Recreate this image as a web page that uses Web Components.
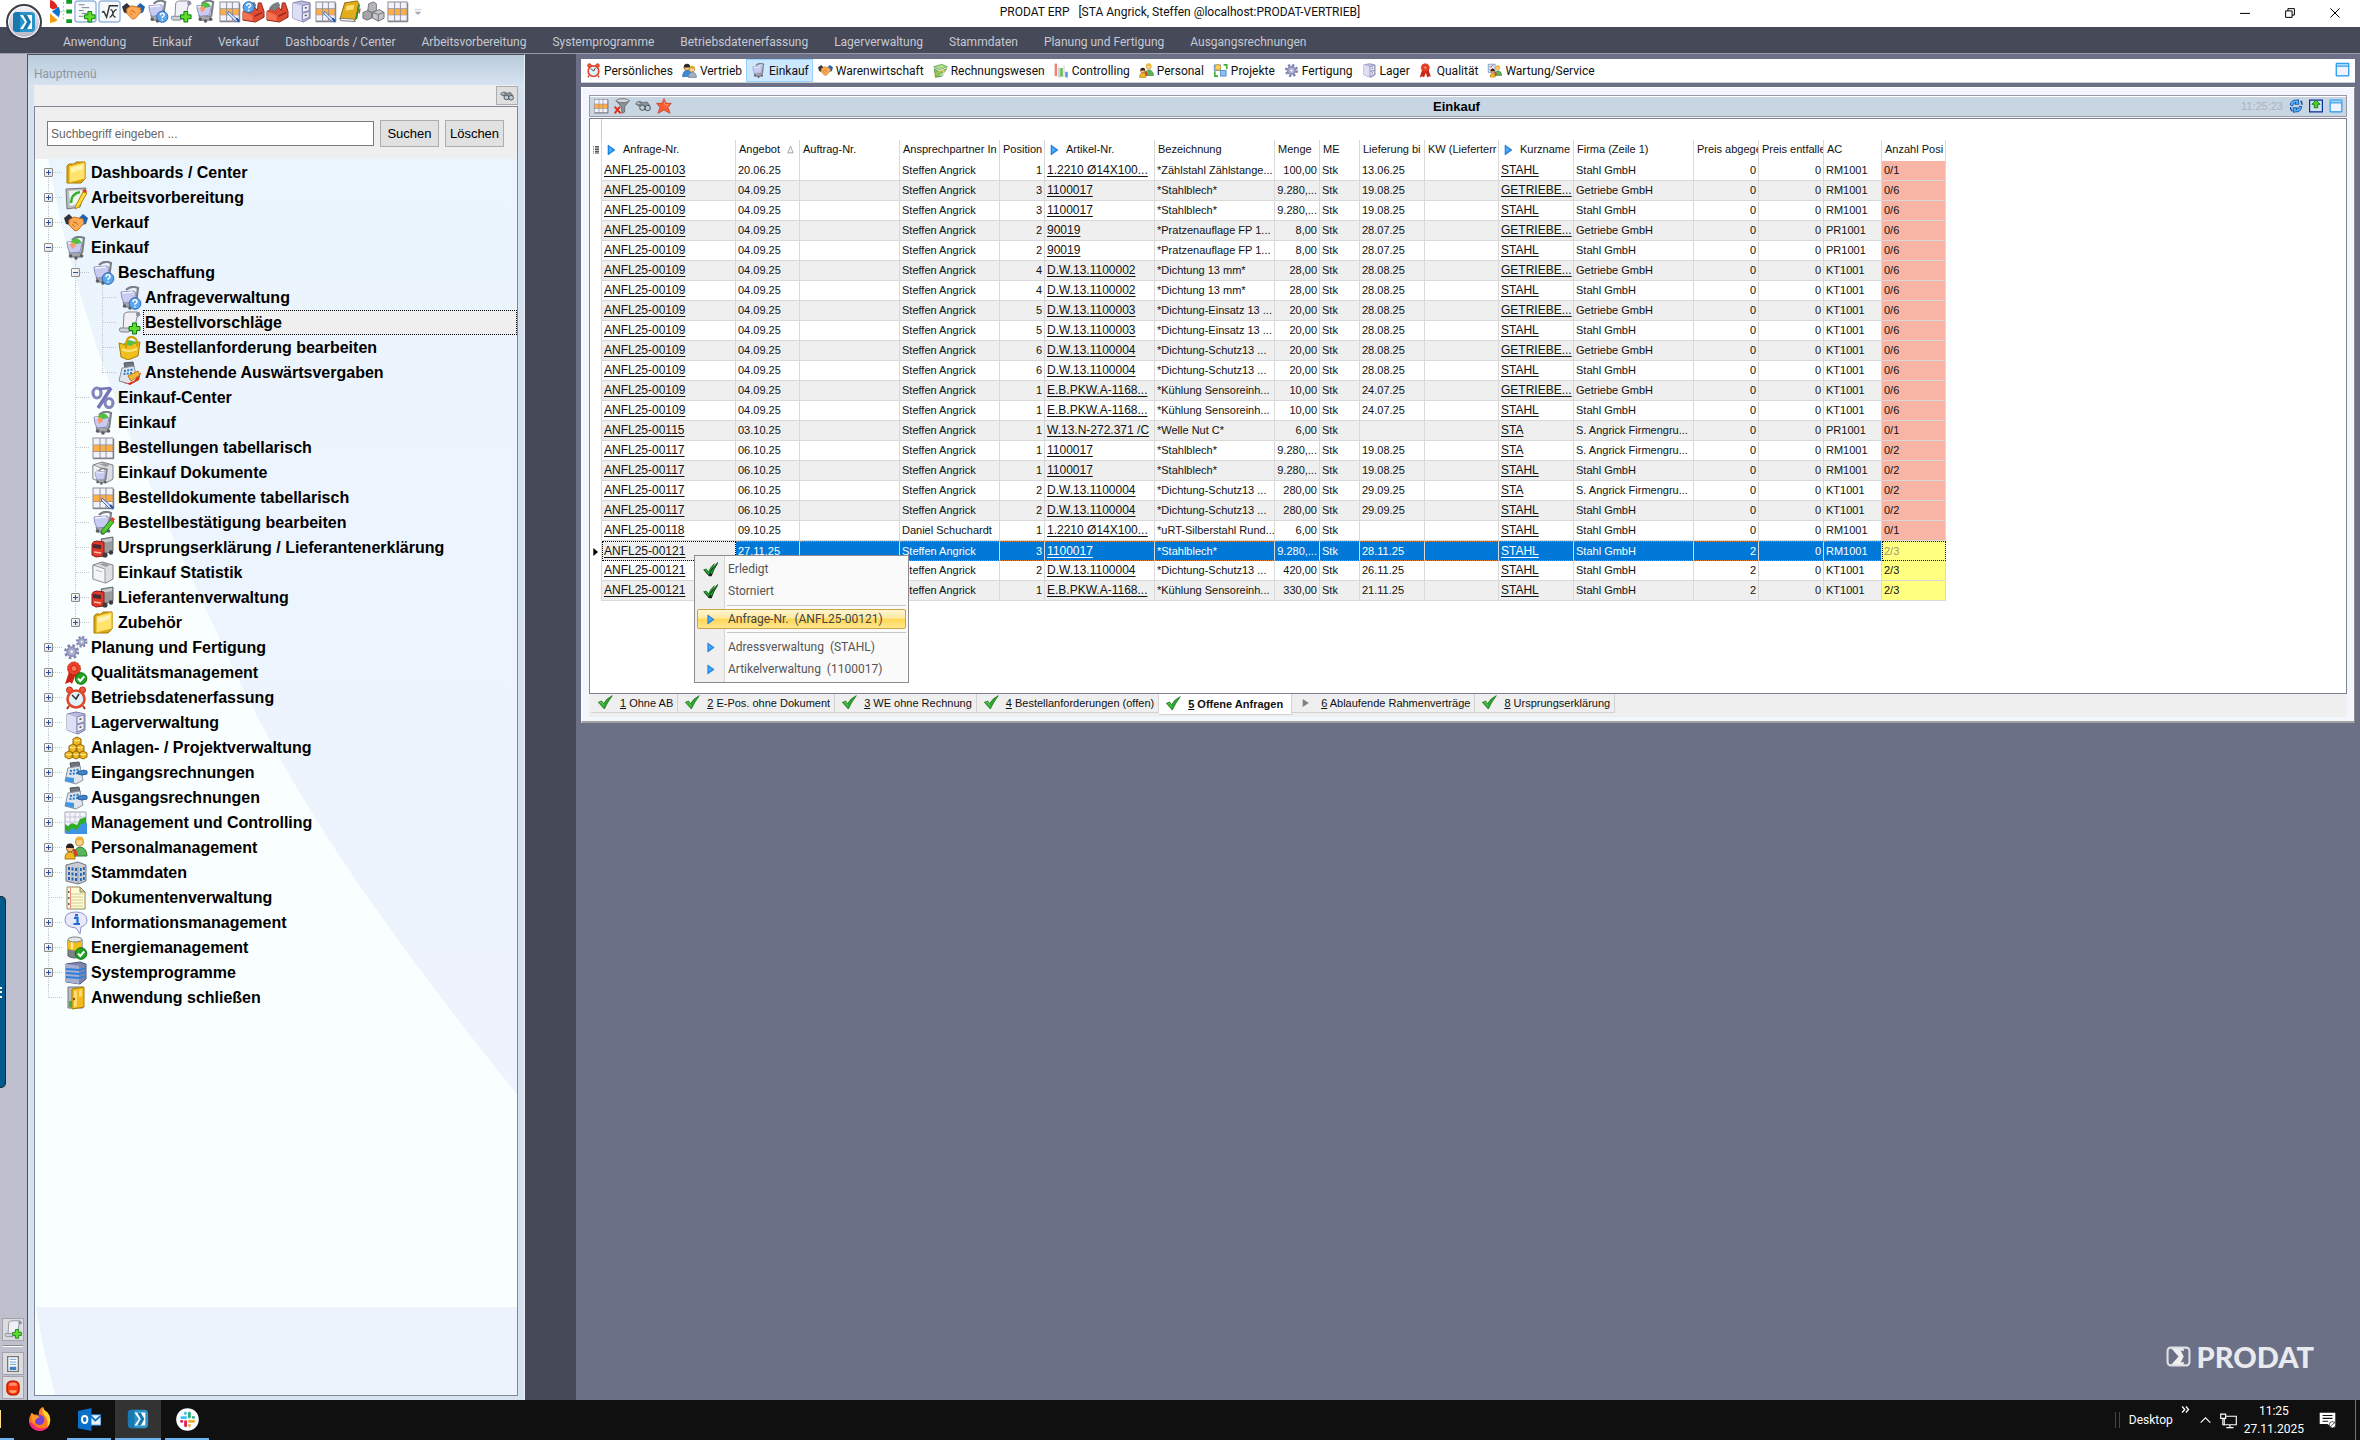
<!DOCTYPE html>
<html lang="de">
<head>
<meta charset="utf-8">
<title>PRODAT ERP</title>
<style>
html,body{margin:0;height:100%}
body{font-family:Roboto,"Open Sans",sans-serif;font-size:12px;overflow:hidden;
  --slate:#464957;--desk:#6b7086;--ui:Roboto,"Open Sans",sans-serif;--grid:"Liberation Sans",Arial,sans-serif}
erp-app{height:100vh}
</style>
</head>
<body>
<erp-app></erp-app>
<script>
/* ---------- icon parts, all on a 24x24 canvas ---------- */
const P={};
P.plus='<path d="M14.5 12h4v3.500h3.500v4h-3.500v3.500h-4v-3.500h-3.500v-4h3.500z" fill="#5fdc2c" stroke="#0c7a10"/>';
P.q='<circle cx="17" cy="17.500" r="5.800" fill="#5aa7ee" stroke="#2a66b4"/><path d="M15 16q0-2.200 2-2.200t2 1.900q0 1-2 2.200v.800M17 20.200v1.200" fill="none" stroke="#fff" stroke-width="1.500"/>';
P.ok='<circle cx="17" cy="17.500" r="5.800" fill="#22a322" stroke="#0d6e14"/><path d="M14 17.500l2.300 2.500 4-4.600" fill="none" stroke="#fff" stroke-width="2"/>';
P.cartBase='<path d="M8 4q4-4 9-3l3 1-2 15" fill="none" stroke="#7d8086" stroke-width="2.200"/><path d="M5 16l13 1-2 4H7z" fill="#a5a7ab" stroke="#6d6f74"/><circle cx="6.500" cy="20" r="1.800" fill="#5c5e63"/><circle cx="12" cy="22" r="1.800" fill="#5c5e63"/><circle cx="17.500" cy="20" r="1.800" fill="#5c5e63"/>';
P.basket='<path d="M3 6l13-1 2 2-2 9-10 1q-3-5-3-11z" fill="#c9cbf0" stroke="#8d90bd"/><path d="M4 7l11-1" stroke="#f2f2ff" stroke-width="1.500"/>';
P.load='<path d="M7 5l5-3 4 2 1 3-9 2z" fill="#4fc13a"/><path d="M6 8l4-2 2 4-4 3z" fill="#ff9a6a"/>';
P.gridBase='<path d="M1.500 1.500h21v21h-21z" fill="#8f9099"/><path d="M2.500 2.500h6v6h-6zM9.500 2.500h5v6h-5zM15.500 2.500H21.500v6h-6zM2.500 16h6v5.500h-6zM9.500 16h5v5.500h-5zM15.500 16H21.500v5.500h-6z" fill="#f1f2fb"/><path d="M2.500 9.300h6v6h-6zM9.500 9.300h5v6h-5zM15.500 9.300H21.500v6h-6z" fill="#ffad45"/><path d="M2 22.700h20.700V3" fill="none" stroke="#6f7078"/>';
P.tool='<path d="M11 12l9 8 2 3-4-1-8-8z" fill="#dfe6f7" stroke="#4e6ca8"/><path d="M19 19l3 3" stroke="#1d4fa3" stroke-width="2"/>';
P.factory='<path d="M1 21V12l5-3 3 3 4-5 3 4 1-8h3l3 9v6l-9 5z" fill="#dd4b32" stroke="#92261a"/><path d="M1 12l10 4v6L1 20z" fill="#f4714f"/><path d="M3 9q3-6 10-7l2 4-6 5z" fill="#7b7e84"/><path d="M13 17l8-4" stroke="#92261a" stroke-width="1.500"/>';
P.folder='<path d="M3 5l2-2 5 0 2-2 9 0v17l-4 4H3z" fill="#e0a80d" stroke="#a67a06"/><path d="M5 5l16-4v17L5 22z" fill="#ffe36b" stroke="#d9a514"/><path d="M7 7l12-3v4L7 12z" fill="#fff3b4"/>';
P.register='<path d="M6 2l9-1 1 5-9 1z" fill="#6d757e" stroke="#555"/><path d="M4 7l12-2 3 14-7 4-11-3z" fill="#dfe5ea" stroke="#8b939b"/><path d="M6 10l9-1.500M5.500 13l9-1" stroke="#2879c9" stroke-width="2" stroke-dasharray="2 1.300"/>';
P.truck='<path d="M10 3l12-2v14l-9 3z" fill="#9a9ca0" stroke="#6a6c70"/><path d="M11 4l10-2v3l-10 2z" fill="#c9cbce"/><path d="M1 8q1-3 5-3l7 1v14l-8 1-4-2z" fill="#e0392a" stroke="#8d1c14"/><path d="M2 8l8 1v4l-8-1z" fill="#432c33"/><path d="M3 16l7 1" stroke="#ffc1a8" stroke-width="1.500"/><circle cx="14" cy="19" r="2.600" fill="#3c3c40"/><circle cx="20" cy="16.500" r="2.200" fill="#3c3c40"/>';
P.printer='<path d="M2 4l9-3 11 3v14l-7 4-13-4z" fill="#dcdee2" stroke="#7f8287"/><path d="M2 4l12 4v14L2 18z" fill="#f4f5f6" stroke="#9a9da1"/><path d="M8 3l6-1 5 2-4 2z" fill="#9b9fa5"/><path d="M5 9l6 2" stroke="#b7babf"/>';
P.gear='<circle cx="12" cy="12" r="8.500" fill="none" stroke="#7f83ad" stroke-width="4" stroke-dasharray="3.600 3.070"/><circle cx="12" cy="12" r="6" fill="#b9bcdf" stroke="#8f93bb" stroke-width="3"/><circle cx="12" cy="12" r="2.500" fill="#fff" stroke="#8488b0"/>';
P.medal='<path d="M5 11L1 23l5-2 2 2 3-8 2 8 3-2 3 1-4-12z" fill="#c92516"/><circle cx="10" cy="7.500" r="6.500" fill="#ee4027" stroke="#b01c10" stroke-dasharray="2 1"/><circle cx="10" cy="7.500" r="3" fill="#ff7a5c" stroke="#c12815"/>';
P.clock='<circle cx="5.500" cy="4" r="3" fill="#f0573b" stroke="#b62b17"/><circle cx="18.500" cy="4" r="3" fill="#f0573b" stroke="#b62b17"/><path d="M5 20l-2 3M19 20l2 3" stroke="#b62b17" stroke-width="2"/><circle cx="12" cy="13" r="8.500" fill="#dff3fb" stroke="#e2452a" stroke-width="2.600"/><path d="M8 9l4 4 3-5" fill="none" stroke="#333" stroke-width="1.500"/>';
P.cabinet='<path d="M3 3l9-2 9 2v16l-7 4-11-4z" fill="#b9badd" stroke="#7d7fab"/><path d="M3 3l9 3v16l-9-3z" fill="#dedff5"/><path d="M13 6l7-2v7l-7 2zM13 14l7-2v6l-7 3z" fill="#eeeefa" stroke="#8385ad"/><path d="M15.500 8.500l2-.700M15.500 16.500l2-.900" stroke="#555" stroke-width="1.500"/>';
P.person='<circle cx="15.500" cy="6" r="4" fill="#fbd08a" stroke="#c98a24"/><path d="M11 5.500q0-5 4.500-5t4.500 5q-4-3-9 0z" fill="#e9b532"/><path d="M10 20q0-8 6-9 7 1 7 9z" fill="#58b55a" stroke="#2e7e35"/><path d="M8 13h4l2 6-3 2z" fill="#d9402c"/><circle cx="6" cy="12.500" r="3.500" fill="#f3bf7a" stroke="#8d5a22"/><path d="M2 12q0-4.500 4-4.500t4 4.500z" fill="#28221e"/><path d="M1 23q0-7 5-7t5 7z" fill="#f1b724" stroke="#a87607"/>';
P.win='<rect x="2" y="2" width="20" height="20" rx="1" fill="#f1f2ff" stroke="#1f97ee" stroke-width="2"/><path d="M2 6.500h20" stroke="#1f97ee" stroke-width="2"/><path d="M3 4h18" stroke="#9fdcff" stroke-width="2"/>';
P.hand='<path d="M0 7l5-4 4 4-3 7-4-1z" fill="#2f343d"/><path d="M24 7l-5-4-4 4 3 7 4-1z" fill="#1e62b8"/><path d="M5 9l5-3 9 2 1 4-6 7-3 1-6-6z" fill="#fbaa55" stroke="#cf6f1c"/><path d="M9 11l4 1M11 16l-3-3M14 14l-3-3" stroke="#cf6f1c"/>';
P.scroll='<path d="M6 3q2-2 4-2h9q3 0 3 3l-3 2-3 14H5z" fill="#f0f0f6" stroke="#85878f"/><path d="M19 1q3 0 3 3l-3 2q-2-3 0-5z" fill="#8a8da6"/><path d="M2 17h9q2 2 0 4H3q-3-1-1-4z" fill="#cfd0dd" stroke="#85878f"/>';
P.binoc='<path d="M1 9l6-4 5 2 6-1 4 5-2 6-5 1-4-5-5-1z" fill="#8f949a" stroke="#4d5156"/><ellipse cx="5" cy="8" rx="3.500" ry="2.500" fill="#b5babf" stroke="#5d6166"/><circle cx="11" cy="14.500" r="4" fill="#b8cdd6" stroke="#4d5156" stroke-width="1.500"/><circle cx="19" cy="15" r="4" fill="#b8cdd6" stroke="#4d5156" stroke-width="1.500"/>';
P.tri='<path d="M6 2l14 10L6 22z" fill="#1f8ff0" stroke="#0d5fb8"/><path d="M8 6v11l7-5z" fill="#4fadff"/>';
P.sheet='<rect x="1" y="1" width="22" height="22" rx="3" fill="#f7fafd" stroke="#98b7de" stroke-width="1.500"/>';
P.logo='<rect x="1" y="2" width="22" height="20" rx="4" fill="#2a94c9"/><path d="M1 6q0-4 4-4h3v20H5q-4 0-4-4z" fill="#1879b0"/>';
const pencil='<path d="M20 8l3 3-9 11-4 1 1-4z" fill="#54cd35" stroke="#23811a"/><path d="M19 9l2-3 3 2-2 3z" fill="#e2402a"/>';
const ICONS={
 pie:'<path d="M0 0q6 1 8 8L3 10 0 8z" fill="#e0231c"/><path d="M2 12l7-5q3 5 0 11z" fill="#1272d0"/><path d="M0 14l8 7q-4 3-8 3z" fill="#f39c12"/><path d="M17 0h6v4h-6zM17 10h6v4h-6zM17 20h6v4h-6z" fill="#0e9b26"/><path d="M11 12h5M14 2v20" stroke="#8bd194" stroke-width="1" stroke-dasharray="2 2"/>',
 docplus:P.sheet+'<path d="M5 5h6M8 8h8M5 11h5M8 14h6M5 17h5" stroke="#77808c"/>'+P.plus,
 sqrt:P.sheet+'<path d="M4 13l2-1 3 6 3-12h9" fill="none" stroke="#333" stroke-width="1.500"/><path d="M13 10q2 0 2.500 4t3 4M19.500 10q-2 0-4 4t-3.500 4" fill="none" stroke="#333" stroke-width="1.300"/>',
 hands:P.hand,cart:P.cartBase+P.basket+P.load,cartq:P.cartBase+P.basket+P.q,cartplain:P.cartBase+P.basket,
 cartpen:P.cartBase+P.basket+pencil,
 scroll:P.scroll+P.plus,grid:P.gridBase,gridpen:P.gridBase+P.tool,
 factory:P.factory,factoryq:P.factory+'<g transform="translate(-10 -10)">'+P.q+'</g>',
 cabinet:P.cabinet,
 book:'<path d="M7 3l13-2 2 3-4 17-16-1z" fill="#e2ad1a" stroke="#8e6606"/><path d="M2 19l14 1 2 2.500-15-1z" fill="#fff" stroke="#777"/><path d="M9 6l8-1-1 5-8 1z" fill="#ffdf70"/><path d="M22 5l-3 15" stroke="#2f8f3a" stroke-width="2"/><path d="M23 9l-1 5" stroke="#d9402c" stroke-width="1.500"/>',
 bricks:'<path d="M7 4l5-2 3 2v7l-5 2-4-2z" fill="#b3b5b8" stroke="#77797d"/><path d="M1 13l5-2 4 2v6l-5 2-4-2z" fill="#a4a6a9" stroke="#707276"/><path d="M11 13l7-3 5 3v6l-6 3-6-3z" fill="#c5c7ca" stroke="#707276"/><path d="M11 13l6 2 6-2M17 15v7" fill="none" stroke="#707276"/>',
 folder:P.folder,
 plan:'<path d="M2 3l20-1-6 19-13 2z" fill="#b9bdc1" stroke="#73777c"/><path d="M5 5l14-1-4 14-9 2z" fill="#eef6ee"/><path d="M7 17q0-9 9-11" fill="none" stroke="#36b136" stroke-width="2.500"/><path d="M19 6l4 1-8 14-4 2 1-4z" fill="#ffd83b" stroke="#b98b0a"/><path d="M18 5l2-2 3 2-1 2z" fill="#dd3a28"/>',
 bag:'<path d="M1 7l7 2 14-3-2 14-10 4-7-3z" fill="#f1bf1d" stroke="#a97f05"/><path d="M5 8l6-4 8 2-6 4z" fill="#57c145"/><path d="M8 12Q8 0 14 1t5 9" fill="none" stroke="#d39d07" stroke-width="2.200"/><path d="M4 13q5 4 15 0" fill="none" stroke="#ffe684" stroke-width="2"/>',
 registerred:P.register+'<path d="M3 20l5 3 8-3 7-9-2 8-9 5z" fill="#d9301d"/><path d="M10 15l10-5 2 4-9 6z" fill="#f5b83b" stroke="#b57c10"/>',
 register:P.register+'<path d="M2 16l8 1v5l-9-2z" fill="#3f97e6"/><path d="M14 10l4 0 1-1 4 1v3l-5 1-4-1z" fill="#3f86cf" stroke="#275b99"/>',
 percent:'<path d="M20 2L7 22" stroke="#7376b4" stroke-width="3.500"/><ellipse cx="6" cy="7" rx="4" ry="5" fill="none" stroke="#8386bd" stroke-width="3.200"/><ellipse cx="18" cy="17" rx="4" ry="4.500" fill="none" stroke="#8386bd" stroke-width="3.200"/><path d="M8 3l12-1" stroke="#7376b4" stroke-width="2.500"/>',
 printcart:P.printer+'<g transform="translate(2 7) scale(.7)">'+P.cartBase+P.basket+'</g>',
 printer:P.printer,truck:P.truck,
 gears:'<g transform="translate(-1 7) scale(.72)">'+P.gear+'</g><g transform="translate(11 -1) scale(.56)">'+P.gear+'</g>',
 gear:P.gear,medal:P.medal,medalok:P.medal+P.ok,clock:P.clock,
 gold:'<g fill="#f0b81e" stroke="#93690a"><path d="M9 3l4-2 4 2v5l-4 2-4-2z"/><path d="M5 10l4-2 4 2v5l-4 2-4-2zM12 10l4-2 4 2v5l-4 2-4-2z"/><path d="M1 17l4-2 4 2v4l-4 2-4-2zM8 17l4-2 4 2v4l-4 2-4-2zM15 17l4-2 4 2v4l-4 2-4-2z"/></g><path d="M10 4l3 1 3-1M6 11l3 1 3-1M13 11l3 1 3-1M2 18l3 1 3-1M9 18l3 1 3-1M16 18l3 1 3-1" fill="none" stroke="#fff0a5"/>',
 area:'<path d="M1 1h21v21H1z" fill="#f4f5fb" stroke="#a5a7b8"/><path d="M6 1v20M11 1v20M16 1v20M1 6h21M1 11h21" stroke="#c5c7d6"/><path d="M1 22v-6l6 1 6-2 4-5 6 2v11H3z" fill="#3f93e4"/><path d="M1 13l3 2 4-3 5 2 3-6 6-2v6l-5 1-4 6-5-2-4 4-3-3z" fill="#2fae25"/>',
 people:P.person,
 building:'<path d="M2 4l12-3 8 3v16l-8 3-12-3z" fill="#c9ccd4" stroke="#71757e"/><path d="M14 6v17" stroke="#8b8f99"/><g fill="#2463b5"><path d="M4 6h2v3H4zM7.500 6.500h2v3h-2zM11 7h2v3h-2zM4 11h2v3H4zM7.500 11.500h2v3h-2zM11 12h2v3h-2zM4 16h2v3H4zM7.500 16.500h2v3h-2zM11 17h2v3h-2zM16 7h1.800v3H16zM19 6h1.800v3H19zM16 12h1.800v3H16zM19 11h1.800v3H19zM16 17h1.800v3H16zM19 16h1.800v3H19z"/></g>',
 notes:'<path d="M3 1h13l5 5v17H3z" fill="#fffbd0" stroke="#8e8a62"/><path d="M16 1v5h5z" fill="#d8d28f" stroke="#8e8a62"/><path d="M7 8h12M7 11h12M7 14h12M7 17h12M7 20h12" stroke="#d2cc96"/><path d="M6.500 1v22" stroke="#e68a8a"/><path d="M4 6h1.500M4 12h1.500M4 18h1.500" stroke="#333" stroke-width="1.500"/>',
 info:'<path d="M12 1q10 0 11 8 0 5-6 7l-1 7-4-6Q1 16 1 9q0-8 11-8z" fill="#e7e8fb" stroke="#8f92c4"/><path d="M12.500 3v2.500" stroke="#1b6fd0" stroke-width="3"/><path d="M10 7h3.500v6M9.500 13h6.500" fill="none" stroke="#1b6fd0" stroke-width="2.200"/>',
 battery:'<path d="M4 4v16q6 4 14 0V4z" fill="#7d8188" stroke="#5a5d63"/><path d="M4 4v9q7 3 14 0V4z" fill="#f2bd17"/><path d="M8 5v8" stroke="#ffe79a" stroke-width="2.500"/><ellipse cx="11" cy="3.500" rx="7" ry="2.500" fill="#e4e6e8" stroke="#7d8085"/>'+P.ok,
 server:'<path d="M2 3l14-2 6 2v15l-6 5-14-2z" fill="#7f86ad" stroke="#4f5680"/><path d="M2 3l13 2v18L2 21z" fill="#a7aed0"/><path d="M2 8l13 1 7-2M2 12l13 1 7-2M2 16l13 1 7-2" fill="none" stroke="#2d7fdc" stroke-width="1.800"/>',
 door:'<path d="M4 1h15v21H4z" fill="#b9bcc0" stroke="#74777b"/><path d="M5 15h3v6H5z" fill="#49b13d"/><path d="M8 3l12-2v20L8 23z" fill="#f4ba1a" stroke="#a97c08"/><path d="M15 4l3-.500v7l-3 .500zM10 5l3-.500v16l-3 .500z" fill="#ffdd70"/><circle cx="10" cy="13" r="1.200" fill="#7c5600"/>',
 binoc:P.binoc,
 funnel:'<path d="M3 4q10-5 20 0l-7 9v8l-4 2-1-10z" fill="#8c9096" stroke="#55585d"/><ellipse cx="13" cy="4" rx="9.500" ry="2.800" fill="#d6d9dc" stroke="#55585d"/><path d="M1 13l9 10M9 13L1 23" stroke="#e0331c" stroke-width="3"/>',
 star:'<path d="M12 1l3 7 8 0-5 6 3 9-9-5-9 5 3-9-5-6 8 0z" fill="#ff5b33" stroke="#c32d10"/><path d="M12 5l1.500 5 5 0-3 3" fill="none" stroke="#ffb193"/>',
 refresh:'<path d="M2 10q2-9 11-8l3-1 1 8-7 0 2-3q-5 0-6 6zM22 13q-2 10-11 9l-3 1-1-8 7 0-2 3q5 0 6-6z" fill="#58b2fa" stroke="#0d50a5" stroke-width="1.500"/><path d="M20 3q3 4 2 7M3 14q-1 5 3 7" stroke="#0d50a5" stroke-width="2.500" fill="none"/>',
 exp:'<path d="M1 2h22v20H1z" fill="#cfe0ee" stroke="#062f95" stroke-width="2"/><path d="M12 2l7 7h-4v6H9V9H5z" fill="#49d326" stroke="#0a7a10" stroke-width="1.500"/>',
 win:P.win,
 check:'<path d="M2 11l5-2 3 4Q14 5 23 1q-7 9-12 20z" fill="#2ea82e" stroke="#126612"/><path d="M4 12l3-1 3 5" fill="none" stroke="#7be070"/>',
 dbl:'<path d="M1 14l4-1 4 4Q14 8 23 3q-7 9-10 20H9z" fill="#1d1f1d"/><path d="M1 13l4-1 3 5Q11 9 17 4q-5 8-8 17z" fill="#23b031" stroke="#0a5b12"/><path d="M10 15l2 1Q16 9 22 2q-6 10-9 18z" fill="#23c031" stroke="#0a5b12"/>',
 tri:P.tri,trigrey:'<path d="M7 6l9 6-9 6z" fill="#7d7f84"/>',
 users:'<circle cx="8" cy="7" r="5" fill="#f5c684" stroke="#7c5420"/><path d="M3 7q0-6 5-6t5 6z" fill="#2f2a28"/><path d="M1 22q0-10 8-10 6 0 6 9z" fill="#3f8bd8" stroke="#215698"/><circle cx="16" cy="10" r="4.500" fill="#fbd79d" stroke="#a07020"/><path d="M11.500 9q1-5 5-4.500t4 4.500z" fill="#dba62a"/><path d="M10 23q0-8 7-8 6 0 6 8z" fill="#9fb0c4" stroke="#5c6f86"/>',
 money:'<path d="M1 6l13-4 9 4-12 5z" fill="#a9dd8d" stroke="#4c8c34"/><path d="M2 9l9 5 11-5-8 12-10 2z" fill="#7fc460" stroke="#3d7f28"/><path d="M9 13q5-3 8 0t-6 7" stroke="#d8e6c9" stroke-width="2" fill="none"/><path d="M2 20q8-8 18-9" stroke="#efb733" stroke-width="1.500" fill="none"/>',
 bars:'<path d="M1 1h4v20H1z" fill="#ee8277"/><path d="M7 7h2v16H7z" fill="#b3b5ba"/><path d="M10 8h4v14h-4z" fill="#62b84c"/><path d="M15 4h2v18h-2z" fill="#d2d4d8"/><path d="M18 14h4v9h-4z" fill="#5a93dc"/>',
 project:'<path d="M2 3h10v9H2z" fill="#a7c7f0" stroke="#3b70b4"/><circle cx="8" cy="7" r="4.500" fill="#ffd05a" stroke="#c48a10"/><path d="M12 12h9v9h-9z" fill="#8bbef2" stroke="#2d68ae"/><path d="M3 13v8h5M17 3h5v7" fill="none" stroke="#3fae36" stroke-width="2.500"/>',
 service:'<path d="M2 2h11v13H2z" fill="#dfeaf9" stroke="#4579bb"/><path d="M4 5l2 2 4-4M4 10l2 2 4-4" stroke="#e04a34" stroke-width="1.500" fill="none"/><g transform="translate(4 3) scale(.85)">'+P.person+'</g>',
 list:'<path d="M4 1h16v22H4z" fill="#fff" stroke="#777" stroke-width="2"/><path d="M7 5h10M7 9h10M7 12.500h10" stroke="#6fa0cf" stroke-width="1.500"/><path d="M7 16h10v5H7z" fill="#3f82bf"/>',
 red:'<rect x="4" y="3" width="16" height="18" rx="6" fill="#ff3a10" stroke="#c21c00" stroke-width="2"/><path d="M7 6q5-3 10 0v3H7z" fill="#ff8f76"/><path d="M7 15h10q-1 4-5 4t-5-4z" fill="#ffa96b"/>',
 logo:P.logo+'<path d="M8 5h12v14H8l5-7z" fill="#fff"/><path d="M11 5h4l4 7-4 7h-4l4-7z" fill="#1879b0"/>',
 mark:'<rect x="1.500" y="3.500" width="21" height="17" rx="3" fill="none" stroke="#dedfe5" stroke-width="2"/><path d="M5 4h12v3l-3-1 3 6-3 6 3-1v3H5l7-8z" fill="#f0f0f2"/>',
 firefox:'<path d="M12 2q2-2 3-2 1 4 4 5 4 5 3 10-2 8-10 9-9-1-11-9 0-6 3-9l2 2q3-1 5 0-1-3 1-6z" fill="#ff7a1c"/><path d="M15 0q1 4 4 5 4 5 3 10 0 3-3 5 2-7-2-11-4-4-2-9z" fill="#ffd53a"/><path d="M1 14q1 9 10 10 7 0 10-5-8 5-14 0-3-3-6-5z" fill="#f0297a"/><circle cx="11.500" cy="13" r="5" fill="#7542d4"/><path d="M3 6l4 2 5 2-4 2q-2 3 0 5-4-2-4-6z" fill="#ff9a28"/>',
 outlook:'<path d="M13 7h11v11H13z" fill="#e9f2fa" stroke="#0f6fc4"/><path d="M13 8l5 5 6-5" fill="none" stroke="#0f6fc4" stroke-width="1.800"/><path d="M0 3l14-3v24L0 21z" fill="#0a6fc8"/><ellipse cx="7" cy="12" rx="2.800" ry="3.600" fill="none" stroke="#fff" stroke-width="2"/>',
 slack:'<circle cx="12" cy="12" r="11.800" fill="#fff"/><g stroke-width="3" stroke-linecap="round"><path d="M6 10h4M9.800 5.500v.300" stroke="#36c5f0"/><path d="M14 5.500v4M18 9.800h.300" stroke="#2eb67d"/><path d="M14 14h4.500M14 18.200v.300" stroke="#ecb22e"/><path d="M10 14.200v4.300M5.800 14h.300" stroke="#e01e5a"/></g>',
 net:'<path d="M6 6h17v12H6zM14 18v4M9 22h10" fill="none" stroke="#fff" stroke-width="1.600"/><path d="M1 3h7v6H1z" fill="#101010" stroke="#fff" stroke-width="1.600"/><path d="M4 9v9h3" fill="none" stroke="#fff" stroke-width="1.600"/>',
 note:'<path d="M1 1h22v16h-5v5l-6-5H1z" fill="#fff"/><path d="M5 5h14M5 9h14M5 13h8" stroke="#101010" stroke-width="1.500"/><circle cx="19" cy="18" r="4.500" fill="#fff" stroke="#101010"/><path d="M16 21l6-6" stroke="#101010"/>',
 chev:'<path d="M3 16l9-9 9 9" fill="none" stroke="#fff" stroke-width="2"/>',
 raquo:'<path d="M3 4l7 8-7 8M13 4l7 8-7 8" fill="none" stroke="#fff" stroke-width="3.500"/>',
 min:'<path d="M0 13h24" stroke="#000" stroke-width="2.400"/>',
 restore:'<path d="M1.500 7h15.500v15.500H1.500zM7 7V1.500h15.500v15.500h-5.500" fill="none" stroke="#000" stroke-width="2.400"/>',
 close:'<path d="M1 1l22 22M23 1L1 23" stroke="#000" stroke-width="2.400"/>',
 over:'<path d="M2 5h20M4 12h16l-8 8z" stroke="#aaaab8" stroke-width="2" fill="#aaaab8"/>',
 sort:'<path d="M12 3l7 18H5z" fill="none" stroke="#888" stroke-width="2"/>',
 rows:'<path d="M9 1h12M9 6h12M9 11h12M9 16h12M9 21h12M3 1h2M3 6h2M3 11h2M3 16h2M3 21h2" stroke="#111" stroke-width="2.500"/>',
 cur:'<path d="M4 0l14 12L4 24z" fill="#000"/>'
};
const base=(css,html)=>{const t=document.createElement('template');
  t.innerHTML=`<style>*{box-sizing:border-box}button{font:inherit;color:inherit;background:none;border:0;padding:0;margin:0}${css}</style>${html}`;return t;};
const def=(name,css,html,ready)=>customElements.define(name,class extends HTMLElement{
  connectedCallback(){ if(this.shadowRoot)return;
    const r=this.attachShadow({mode:'open'});
    r.append(base(css,typeof html==='function'?html(this):html).content.cloneNode(true)); if(ready)ready(this,r);}});
const ic=(n,s=16)=>`<erp-icon name="${n}" style="--s:${s}px"></erp-icon>`;

def('erp-icon',':host{display:inline-flex;flex:none;width:var(--s,24px);height:var(--s,24px)}svg{width:100%;height:100%;display:block}',
  e=>`<svg viewBox="0 0 24 24" aria-hidden="true">${ICONS[e.getAttribute('name')]||''}</svg>`);

/* ---------- title bar ---------- */
def('erp-titlebar',`:host{display:grid;grid-template-columns:minmax(0,1fr) auto minmax(0,1fr);align-items:start;height:27px;background:#fff;position:relative}
.quick{display:flex;align-items:center;padding-left:49px}.quick button{display:flex;width:24px;height:24px;justify-content:center}
.quick .more{margin-left:1px;width:16px;align-items:center}
h1{margin:0;font:12px/25px var(--ui);white-space:pre;color:#111}
.ctl{display:flex;justify-content:flex-end;align-items:center;height:25px;gap:35px;padding-right:20px}
.ctl button{display:flex}
.orb{position:absolute;z-index:3;left:6px;top:4px;width:36px;height:36px;border-radius:50%;border:2px solid #3d404b;background:linear-gradient(#f3f3f7,#b4b5c4);display:flex;align-items:center;justify-content:center;box-shadow:inset 0 0 0 1px #fff}`,
`<button class="orb" aria-label="Anwendungsmenü">${ic('logo',24)}</button>
<div class="quick">${'pie docplus sqrt hands cartq scroll cart gridpen factoryq factory cabinet gridpen book bricks grid'.split(' ').map(n=>`<button aria-label="${n}">${ic(n,23)}</button>`).join('')}<button class="more" aria-label="Mehr">${ic('over',8)}</button></div>
<h1>PRODAT ERP   [STA Angrick, Steffen @localhost:PRODAT-VERTRIEB]</h1>
<div class="ctl"><button aria-label="Minimieren">${ic('min',10)}</button><button aria-label="Wiederherstellen">${ic('restore',10)}</button><button aria-label="Schließen">${ic('close',10)}</button></div>`);

/* ---------- ribbon menu ---------- */
def('erp-menubar',`:host{display:block;background:var(--slate);border-bottom:1px solid #9b9ba8}
nav{display:flex;gap:26px;padding-left:63px;height:26px;align-items:center}
button{color:#c6c9d4;line-height:26px;padding-top:3px;white-space:nowrap}`,
`<nav>${['Anwendung','Einkauf','Verkauf','Dashboards / Center','Arbeitsvorbereitung','Systemprogramme','Betriebsdatenerfassung','Lagerverwaltung','Stammdaten','Planung und Fertigung','Ausgangsrechnungen'].map(t=>`<button>${t}</button>`).join('')}</nav>`);

/* ---------- left dock ---------- */
def('erp-dock',`:host{display:flex;flex-direction:column;justify-content:flex-end;gap:1px;width:27px;background:#bfbfce;padding:0 3px 1px 2px;position:relative}
button{display:flex;align-items:center;justify-content:center;height:23px;background:#dcdcdf;border:1px solid #a3a3ad}
hr{width:20px;height:2px;margin:3px 0 4px 1px;border:0;background:#fff;border-top:1px solid #888}
.fly{position:absolute;left:0;bottom:312px;width:6px;height:192px;background:#005b8c;border:1px solid #1b2430;border-left:0;border-radius:0 5px 5px 0;display:flex;align-items:center;color:#fff}
.fly i{width:2px;height:11px;border-block:2px solid #fff;background:linear-gradient(#fff,#fff) center/2px 2px no-repeat}`,
`<div class="fly"><i></i></div><button aria-label="Bestellvorschläge">${ic('scroll',19)}</button><hr><button aria-label="Liste">${ic('list',16)}</button><button aria-label="Beenden">${ic('red',18)}</button>`);

/* ---------- tree ---------- */
const TREE=[[0,'+','folder','Dashboards / Center'],[0,'+','plan','Arbeitsvorbereitung'],[0,'+','hands','Verkauf'],[0,'-','cart','Einkauf'],
[1,'-','cartq','Beschaffung'],[2,'','cartq','Anfrageverwaltung'],[2,'','scroll','Bestellvorschläge'],[2,'','bag','Bestellanforderung bearbeiten'],[2,'','registerred','Anstehende Auswärtsvergaben'],
[1,'','percent','Einkauf-Center'],[1,'','cart','Einkauf'],[1,'','grid','Bestellungen tabellarisch'],[1,'','printcart','Einkauf Dokumente'],[1,'','gridpen','Bestelldokumente tabellarisch'],[1,'','cartpen','Bestellbestätigung bearbeiten'],[1,'','truck','Ursprungserklärung / Lieferantenerklärung'],[1,'','printer','Einkauf Statistik'],[1,'+','truck','Lieferantenverwaltung'],[1,'+','folder','Zubehör'],
[0,'+','gears','Planung und Fertigung'],[0,'+','medalok','Qualitätsmanagement'],[0,'+','clock','Betriebsdatenerfassung'],[0,'+','cabinet','Lagerverwaltung'],[0,'+','gold','Anlagen- / Projektverwaltung'],[0,'+','register','Eingangsrechnungen'],[0,'+','register','Ausgangsrechnungen'],[0,'+','area','Management und Controlling'],[0,'+','people','Personalmanagement'],[0,'+','building','Stammdaten'],[0,'','notes','Dokumentenverwaltung'],[0,'+','info','Informationsmanagement'],[0,'+','battery','Energiemanagement'],[0,'+','server','Systemprogramme'],[0,'','door','Anwendung schließen']];
def('erp-tree-row',`:host{display:flex;height:25px;align-items:center;font:bold 16px var(--grid);color:#000}
.c{width:27px;height:25px;position:relative;display:flex;align-items:center;justify-content:center;flex:none}
.v::before{content:"";position:absolute;left:13px;top:0;bottom:0;border-left:1px dotted #c3c8cc}
.end::before{bottom:12px}.first::before{top:12px}
.h::after{content:"";position:absolute;left:14px;right:0;top:12px;border-top:1px dotted #c3c8cc}
.x{position:relative;z-index:1;width:9px;height:9px;background:linear-gradient(135deg,#fff,#dcdcdc);border:1px solid #8b8b8b;border-radius:1px;display:block}
.x::before{content:"";position:absolute;left:1px;right:1px;top:3px;height:1px;background:#2c4f9e}
.x.plus::after{content:"";position:absolute;top:1px;bottom:1px;left:3px;width:1px;background:#2c4f9e}
erp-icon{margin-left:2px}
.t{font:inherit;text-align:left;flex:1;height:25px;line-height:23px;margin-left:1px;border:1px solid transparent;padding:0 1px;white-space:nowrap}
:host([selected]) .t{background:#efefef;border:1px dotted #000}`,
e=>{const l=+e.getAttribute('level'),x=e.getAttribute('toggle');let h='';
 for(let i=0;i<=l;i++){const own=i===l;const last=own&&e.hasAttribute('last'),first=own&&e.hasAttribute('first');
  h+=`<span class="c v ${last?'end':''} ${first?'first':''} ${own?'h':''}">${own&&x?`<button class="x ${x==='+'?'plus':''}" aria-label="${x==='+'?'Aufklappen':'Zuklappen'}"></button>`:''}</span>`;}
 return h+ic(e.getAttribute('icon'),24)+'<button class="t"><slot></slot></button>';});

def('erp-mainmenu',`:host{display:flex;flex-direction:column;width:498px;background:#d6e2f0;border:1px solid #4e5160;border-bottom:0;border-right:1px solid #e9eff6;padding:0 6px 4px 6px}
header{height:30px;margin:0 -6px;padding:4px 0 0 6px;background:linear-gradient(#b9cbdb,#d6e2f0);line-height:30px;color:#8f969e}
.bar{height:21px;background:#efefef;display:flex;justify-content:flex-end;flex:none}
.bar button{width:22px;height:19px;margin-top:1px;background:#dfdfdf;border:1px solid #acacac;display:flex;align-items:center;justify-content:center}
.box{flex:1;min-height:0;border:1px solid #7f8798;display:flex;flex-direction:column}
form{display:flex;background:#efefef;padding:13px 13px 12px 12px;gap:6px;flex:none;font:13px var(--grid)}
input{flex:1;min-width:0;height:25px;margin-top:1px;border:1px solid #7a7a7a;font:12px var(--grid);padding:0 3px;background:#fff}
input::placeholder{color:#666}
form button{height:27px;background:#e1e1e1;border:1px solid #adadad;width:59px}
.tree{flex:1;min-height:0;position:relative;background:#f9feff;overflow:hidden}
.bg{position:absolute;left:0;top:0;width:100%;height:100%}
.rows{position:relative;padding-top:1px}`,
`<header>Hauptmenü</header><div class="bar"><button aria-label="Suche">${ic('binoc',14)}</button></div>
<div class="box"><form><input type="search" aria-label="Suchbegriff" placeholder="Suchbegriff eingeben ..."><button type="button">Suchen</button><button type="button">Löschen</button></form>
<div class="tree"><svg class="bg" aria-hidden="true"><defs><linearGradient id="g" x1="0" y1="0" x2="0" y2="1"><stop offset="0" stop-color="#ebf5fd"/><stop offset="1" stop-color="#eef3fd"/></linearGradient></defs><path d="M13 0C45 180 115 330 194 500C265 655 365 790 500 958V0z" fill="url(#g)"/><path d="M1 1148q8 50 22 97H500V1148z" fill="#ecf3fc"/></svg><div class="rows" role="tree"></div></div></div>`,
(e,r)=>{r.querySelector('.rows').innerHTML=TREE.map(([l,x,i,t],n)=>{
 const rest=TREE.slice(n+1);let last=true;for(const k of rest){if(k[0]<l)break;if(k[0]===l){last=false;break;}}
 return `<erp-tree-row level="${l}" toggle="${x}" icon="${i}" ${last?'last':''} ${n===0?'first':''} ${t==='Bestellvorschläge'?'selected':''}>${t}</erp-tree-row>`;}).join('');});

/* ---------- module bar ---------- */
def('erp-modulebar',`:host{display:flex;height:24px;background:#fff;border-bottom:1px solid #c9cbd3;align-items:center;padding:0 5px 0 0;color:#111}
nav{display:flex;flex:1;height:23px}
nav button{display:flex;align-items:center;gap:3px;padding:0 3px 0 4px;border:1px solid transparent;white-space:nowrap}
nav .on{background:#cce8ff;border-color:#99d1ff}`,
`<nav>${[['clock','Persönliches'],['users','Vertrieb'],['cartplain','Einkauf'],['hands','Warenwirtschaft'],['money','Rechnungswesen'],['bars','Controlling'],['people','Personal'],['project','Projekte'],['gear','Fertigung'],['cabinet','Lager'],['medal','Qualität'],['service','Wartung/Service']].map(([i,t])=>`<button class="${t==='Einkauf'?'on':''}">${ic(i,15)}<span>${t}</span></button>`).join('')}</nav><button aria-label="Fenster">${ic('win',15)}</button>`);

/* ---------- grid ---------- */
const G='GETRIEBE...|Getriebe GmbH',S='STAHL|Stahl GmbH',A='STA|S. Angrick Firmengru...';
const pair=(mid,ac)=>[G,S].map(k=>`ANFL25-00109|04.09.25||Steffen Angrick|${mid}||${k}|0|0|${ac}|0/6`);
const St='Steffen Angrick',D4='D.W.13.1100004|*Dichtung-Schutz13 ...',B='1100017|*Stahlblech*|9.280,...|Stk',E='E.B.PKW.A-1168...|*Kühlung Sensoreinh...';
const DATA=[`ANFL25-00103|20.06.25||${St}|1|1.2210 Ø14X100...|*Zählstahl Zählstange...|100,00|Stk|13.06.25||${S}|0|0|RM1001|0/1`,
...pair(`3|${B}|19.08.25`,'RM1001'),...pair('2|90019|*Pratzenauflage FP 1...|8,00|Stk|28.07.25','PR1001'),
...pair('4|D.W.13.1100002|*Dichtung 13 mm*|28,00|Stk|28.08.25','KT1001'),...pair('5|D.W.13.1100003|*Dichtung-Einsatz 13 ...|20,00|Stk|28.08.25','KT1001'),
...pair(`6|${D4}|20,00|Stk|28.08.25`,'KT1001'),...pair(`1|${E}|10,00|Stk|24.07.25`,'KT1001'),
`ANFL25-00115|03.10.25||${St}|1|W.13.N-272.371 /C|*Welle Nut C*|6,00|Stk|||${A}|0|0|PR1001|0/1`,
`ANFL25-00117|06.10.25||${St}|1|${B}|19.08.25||${A}|0|0|RM1001|0/2`,`ANFL25-00117|06.10.25||${St}|1|${B}|19.08.25||${S}|0|0|RM1001|0/2`,
`ANFL25-00117|06.10.25||${St}|2|${D4}|280,00|Stk|29.09.25||${A}|0|0|KT1001|0/2`,`ANFL25-00117|06.10.25||${St}|2|${D4}|280,00|Stk|29.09.25||${S}|0|0|KT1001|0/2`,
`ANFL25-00118|09.10.25||Daniel Schuchardt|1|1.2210 Ø14X100...|*uRT-Silberstahl Rund...|6,00|Stk|||${S}|0|0|RM1001|0/1`,
`ANFL25-00121|27.11.25||${St}|3|${B}|28.11.25||${S}|2|0|RM1001|2/3`,
`ANFL25-00121|27.11.25||${St}|2|${D4}|420,00|Stk|26.11.25||${S}|2|0|KT1001|2/3`,
`ANFL25-00121|27.11.25||${St}|1|${E}|330,00|Stk|21.11.25||${S}|2|0|KT1001|2/3`];
const COLS=[12,134,64,100,100,45,110,120,45,40,65,74,75,120,65,65,58,64];
const HEAD=['>Anfrage-Nr.','Angebot^','Auftrag-Nr.','Ansprechpartner In','Position','>Artikel-Nr.','Bezeichnung','Menge','ME','Lieferung bi','KW (Lieferterr','>Kurzname','Firma (Zeile 1)','Preis abgege','Preis entfalle','AC','Anzahl Posi'];
def('erp-grid',`:host{display:block;position:relative;background:#fff;border:1px solid #7f7f92;margin-top:1px;padding-bottom:92px;font:11px var(--grid);color:#111}
table{border-collapse:separate;border-spacing:0;table-layout:fixed;width:1356px}
th,td{padding:0 2px;white-space:nowrap;overflow:hidden;border-right:1px solid #d9d9d9}
th{height:21px;line-height:19px;font-weight:normal;text-align:left;padding:0 0 0 3px;vertical-align:top}
th span{display:flex;align-items:center;gap:6px}
.gap td{height:21px;border:0}
.gap td:first-child{border-right:1px solid #c9c9c9}
td{height:20px;line-height:19px;border-bottom:1px solid #d9d9d9}
td:first-child,th:first-child{border-bottom:0;padding:0 0 0 2px;background:#fff}
tr.alt td:nth-child(n+2){background:#efefef}
a{font-size:12px;color:inherit;text-decoration:underline;text-underline-offset:2px}
.n{text-align:right}
tr td.r,tr.alt td.r:nth-child(n+2){background:#f8b5a6}tr td.y,tr.alt td.y:nth-child(n+2){background:#ffff80}
tr.sel td:nth-child(n+3){background:#0078d7;color:#fff;border-block:1px dotted #e08030;line-height:17px}
tr.sel td:nth-child(2){background:#efefef;border:1px dotted #000;line-height:17px;padding-left:1px}
tr.sel td.y:nth-child(n+3){background:#ffff80;color:#9a9a6a;border:1px dotted #113;padding-left:1px}
td erp-icon,th erp-icon{vertical-align:middle}
erp-context{position:absolute;left:104px;top:436px}`,
`<table><colgroup>${COLS.map(w=>`<col style="width:${w}px">`).join('')}</colgroup><thead><tr class="gap">${'<td></td>'.repeat(18)}</tr><tr><th>${ic('rows',8)}</th>${HEAD.map(h=>h[0]==='>'?`<th><span>${ic('tri',12)}${h.slice(1)}</span></th>`:h.endsWith('^')?`<th><span>${h.slice(0,-1)}${ic('sort',9)}</span></th>`:`<th>${h}</th>`).join('')}</tr></thead>
<tbody>${DATA.map((d,i)=>`<tr class="${i===19?'sel':i%2?'alt':''}"><td>${i===19?ic('cur',8):''}</td>${d.split('|').map((c,k)=>{
 const cls=[4,7,13,14].includes(k)?'n':k===16?(c==='2/3'?'y':'r'):'';return `<td class="${cls}">${[0,5,11].includes(k)?`<a href="#">${c}</a>`:c}</td>`;}).join('')}</tr>`).join('')}</tbody></table>
<erp-context></erp-context>`);

def('erp-context',`:host{display:block;width:215px;height:128px;background:linear-gradient(90deg,#efefef 29px,#d5d5d5 29px 30px,#fafafa 30px);border:1px solid #8b8b90;padding:2px;font:12px var(--ui);color:#555}
button{display:flex;align-items:center;width:100%;height:22px;white-space:pre;gap:9px;padding-left:6px}
button.s{gap:12px;padding-left:8px}
hr{border:0;height:1px;background:#c5c5c5;margin:3px 0 3px 30px}
.on{height:20px;background:linear-gradient(#fff6d2,#ffe9a0 45%,#ffd755 50%,#ffe68e);border:1px solid #c9a548;border-radius:2px;color:#444}
button.s.on{padding-left:7px}`,
`<button>${ic('dbl',16)}Erledigt</button><button>${ic('dbl',16)}Storniert</button><hr><button class="s on">${ic('tri',11)}Anfrage-Nr.  (ANFL25-00121)</button><hr><button class="s">${ic('tri',11)}Adressverwaltung  (STAHL)</button><button class="s">${ic('tri',11)}Artikelverwaltung  (1100017)</button>`);

def('erp-tabs',`:host{display:flex;height:23px;background:#efefef;padding-left:2px;align-items:flex-start;font:11px var(--grid);color:#111}
button{display:flex;align-items:center;height:19px;gap:7px;padding:0 4px 0 6px;border:solid #d3d3d3;border-width:0 1px 1px 0;white-space:nowrap}
button.on{background:#fff;height:21px;font-weight:bold;padding-right:8px}`,
`${[['1','Ohne AB'],['2','E-Pos. ohne Dokument'],['3','WE ohne Rechnung'],['4','Bestellanforderungen (offen)'],['5','Offene Anfragen'],['6','Ablaufende Rahmenverträge'],['8','Ursprungserklärung']].map(([n,t])=>`<button class="${n==='5'?'on':''}">${ic(n==='6'?'trigrey':'check',16)}<span><u>${n}</u> ${t}</span></button>`).join('')}`);

def('erp-window',`:host{display:block;background:#f3f6fc;border:1px solid #fff;border-right-color:#8a8a92;border-bottom:2px solid #a0a0a0;padding:7px 7px 4px}
header{display:flex;align-items:center;height:22px;background:#c8d5e2;border:1px solid #9a9aa2;box-shadow:inset 0 1px #fff;padding:0 3px}
.l,.r{display:flex;align-items:center;gap:5px}.r{gap:6px;color:#acb4bc;font:11px var(--grid)}
.l button,.r button{display:flex}
h2{flex:1;margin:0;text-align:center;font:bold 13px var(--grid);color:#000}`,
`<header><div class="l">${['grid','funnel','binoc','star'].map(n=>`<button aria-label="${n}">${ic(n,16)}</button>`).join('')}</div><h2>Einkauf</h2><div class="r"><time>11:25:23</time><button aria-label="Aktualisieren">${ic('refresh',14)}</button><button aria-label="Export">${ic('exp',14)}</button><button aria-label="Fenster">${ic('win',14)}</button></div></header><erp-grid></erp-grid><erp-tabs></erp-tabs>`);

/* ---------- task bar ---------- */
def('erp-taskbar',`:host{display:flex;height:40px;background:#101010;color:#fff;align-items:stretch}
.apps{display:flex;flex:1;gap:3px}
.apps button{width:46px;display:flex;align-items:center;justify-content:center;border-bottom:2px solid transparent}
.apps button.run{border-image:linear-gradient(90deg,transparent 3px,#6db3ee 3px calc(100% - 3px),transparent 0) 2}
.apps button.on{background:#333;border-bottom-color:#6db3ee}
.apps .cut{width:14px;border-bottom-color:#6db3ee;justify-content:flex-start}.cut i{width:1px;height:18px;background:#ffe08a}
.tray{display:flex;align-items:center;padding-right:4px}
.tray>*{flex:none}
.grip{width:5px;height:16px;border:solid #444;border-width:0 1px;margin-right:9px}
.up{align-self:flex-start;margin:5px 9px 0 8px;display:flex}
.net{margin-left:8px}
.clk{text-align:center;line-height:18px;margin:0 15px 0 7px;font-size:12px}
.tray button{display:flex}
.end{width:1px;height:40px;background:#777;margin-left:19px}`,
`<div class="apps"><button class="cut" aria-label="Explorer"><i></i></button><button aria-label="Firefox">${ic('firefox',24)}</button><button class="run" aria-label="Outlook">${ic('outlook',23)}</button><button class="on" aria-label="PRODAT">${ic('logo',22)}</button><button class="run" aria-label="Slack">${ic('slack',23)}</button></div>
<div class="tray"><span class="grip"></span><span>Desktop</span><button class="up" aria-label="Weitere">${ic('raquo',9)}</button><button aria-label="Ausgeblendete Symbole">${ic('chev',13)}</button><button class="net" aria-label="Netzwerk">${ic('net',17)}</button><div class="clk">11:25<br>27.11.2025</div><button aria-label="Benachrichtigungen">${ic('note',17)}</button><span class="end"></span></div>`);

/* ---------- shell ---------- */
def('erp-app',`:host{display:flex;flex-direction:column;background:var(--desk)}
main{flex:1;min-height:0;display:flex}
.gutter{width:51px;background:var(--slate);flex:none}
.desk{flex:1;min-width:0;display:flex;flex-direction:column;padding:5px 5px 0;background:var(--desk)}
erp-window{margin-top:4px}
erp-dock,erp-mainmenu{flex:none}
.brand{margin:auto 41px 31px 0;align-self:flex-end;display:flex;align-items:center;gap:6px;font:900 29px/25px Lato,"Open Sans",sans-serif;color:#e9eaee}`,
`<erp-titlebar></erp-titlebar><erp-menubar></erp-menubar><main><erp-dock></erp-dock><erp-mainmenu></erp-mainmenu><div class="gutter"></div><div class="desk"><erp-modulebar></erp-modulebar><erp-window></erp-window><div class="brand">${ic('mark',25)}<span>PRODAT</span></div></div></main><erp-taskbar></erp-taskbar>`);
</script>
</body>
</html>
